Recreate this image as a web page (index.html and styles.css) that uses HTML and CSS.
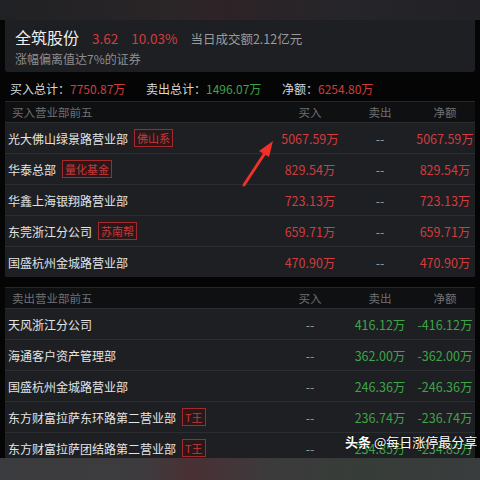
FILE: index.html
```html
<!DOCTYPE html>
<html lang="zh-CN">
<head>
    <meta charset="UTF-8">
    <meta name="viewport" content="width=device-width, initial-scale=1.0">
    <title>全筑股份 龙虎榜</title>
    <link rel="stylesheet" href="styles.css">
</head>
<body>
    <div class="screen">
        <div class="topbar"></div>

        <!-- Stock summary card -->
        <div class="card">
            <div class="headline">
                <span class="stock-name">全筑股份</span>
                <span class="price up">3.62</span>
                <span class="change up">10.03%</span>
                <span class="turnover">当日成交额2.12亿元</span>
            </div>
            <div class="reason">涨幅偏离值达7%的证券</div>
        </div>

        <div class="totals">
            <div class="total">买入总计：<span class="up">7750.87万</span></div>
            <div class="total">卖出总计：<span class="down">1496.07万</span></div>
            <div class="total">净额：<span class="up">6254.80万</span></div>
        </div>

        <!-- Buy side -->
        <div class="table">
            <div class="row head">
                <div class="name">买入营业部前五</div>
                <div class="num">买入</div>
                <div class="num">卖出</div>
                <div class="num">净额</div>
            </div>
            <div class="row">
                <div class="name">光大佛山绿景路营业部<span class="tag">佛山系</span></div>
                <div class="num up">5067.59万</div>
                <div class="num dash">--</div>
                <div class="num up">5067.59万</div>
            </div>
            <div class="row">
                <div class="name">华泰总部<span class="tag">量化基金</span></div>
                <div class="num up">829.54万</div>
                <div class="num dash">--</div>
                <div class="num up">829.54万</div>
            </div>
            <div class="row">
                <div class="name">华鑫上海银翔路营业部</div>
                <div class="num up">723.13万</div>
                <div class="num dash">--</div>
                <div class="num up">723.13万</div>
            </div>
            <div class="row">
                <div class="name">东莞浙江分公司<span class="tag">苏南帮</span></div>
                <div class="num up">659.71万</div>
                <div class="num dash">--</div>
                <div class="num up">659.71万</div>
            </div>
            <div class="row">
                <div class="name">国盛杭州金城路营业部</div>
                <div class="num up">470.90万</div>
                <div class="num dash">--</div>
                <div class="num up">470.90万</div>
            </div>
        </div>

        <!-- Sell side -->
        <div class="table sell">
            <div class="row head">
                <div class="name">卖出营业部前五</div>
                <div class="num">买入</div>
                <div class="num">卖出</div>
                <div class="num">净额</div>
            </div>
            <div class="row">
                <div class="name">天风浙江分公司</div>
                <div class="num dash">--</div>
                <div class="num down">416.12万</div>
                <div class="num down">-416.12万</div>
            </div>
            <div class="row">
                <div class="name">海通客户资产管理部</div>
                <div class="num dash">--</div>
                <div class="num down">362.00万</div>
                <div class="num down">-362.00万</div>
            </div>
            <div class="row">
                <div class="name">国盛杭州金城路营业部</div>
                <div class="num dash">--</div>
                <div class="num down">246.36万</div>
                <div class="num down">-246.36万</div>
            </div>
            <div class="row">
                <div class="name">东方财富拉萨东环路第二营业部<span class="tag">T王</span></div>
                <div class="num dash">--</div>
                <div class="num down">236.74万</div>
                <div class="num down">-236.74万</div>
            </div>
            <div class="row">
                <div class="name">东方财富拉萨团结路第二营业部<span class="tag">T王</span></div>
                <div class="num dash">--</div>
                <div class="num down">234.85万</div>
                <div class="num down">-234.85万</div>
            </div>
        </div>

        <!-- red arrow pointing at the top buyer -->
        <svg class="arrow" width="40" height="50" viewBox="0 0 40 50">
            <path d="M3 46 L24 14" stroke="#f0302a" stroke-width="3" stroke-linecap="round"/>
            <polygon points="32,2 18,12 28,18" fill="#f0302a"/>
        </svg>

        <div class="watermark"><b>头条</b> @每日涨停最分享</div>
    </div>
    <div class="bottombar"></div>
</body>
</html>
```

FILE: styles.css
```css
body {
    margin: 0;
    background-color: #050505;
    font-family: "Noto Sans CJK SC", "Noto Sans", sans-serif;
    color: #e4e4e4;
}
.screen {
    position: relative;
    height: 458px;
    overflow: hidden;
}
.topbar {
    height: 20px;
    background: linear-gradient(90deg, #202124 0%, #2a2527 35%, #2e2326 45%, #262529 70%, #222226 100%);
}
.up {
    color: #d23c3e;
}
.down {
    color: #3fa447;
}
.card {
    margin: 0 5px;
    height: 52px;
    box-sizing: border-box;
    padding: 5px 10px 0;
    background-color: #1d1f23;
    border-radius: 0 0 3px 3px;
}
.headline {
    display: flex;
    align-items: baseline;
    height: 24px;
}
.stock-name {
    font-size: 16px;
    color: #eeeeee;
    margin-right: 13px;
}
.price,
.change {
    font-size: 13.5px;
    margin-right: 13px;
}
.turnover {
    font-size: 12.5px;
    color: #9a9a9c;
}
.reason {
    font-size: 12px;
    color: #8e8e90;
    line-height: 20px;
}
.totals {
    display: flex;
    height: 29px;
    box-sizing: border-box;
    padding: 4px 0 0 10px;
    align-items: center;
    font-size: 12px;
    color: #d8d8d8;
}
.total {
    width: 136px;
}
.table {
    margin: 0 5px;
    background-color: #1d1f23;
}
.table.sell {
    margin-top: 10px;
}
.row {
    display: grid;
    grid-template-columns: 1fr 70px 70px 60px;
    align-items: center;
    height: 31px;
    border-top: 1px solid #2b2d31;
    box-sizing: border-box;
    font-size: 12px;
}
.row.head {
    height: 21px;
    background-color: #0f1012;
    border-top: 1px solid #26272b;
    color: #6f7073;
    font-size: 11.5px;
}
.name {
    display: flex;
    align-items: center;
    padding-left: 3px;
    white-space: nowrap;
}
.head .name {
    padding-left: 7px;
}
.num {
    text-align: center;
    white-space: nowrap;
    font-size: 12.5px;
}
.head .num {
    font-size: 11.5px;
}
.dash {
    color: #9a9a9a;
}
.tag {
    margin-left: 6px;
    padding: 0 2px;
    height: 16px;
    line-height: 16px;
    font-size: 11px;
    color: #c8393b;
    background-color: #2a1719;
    border: 1px solid #a4292c;
}
.arrow {
    position: absolute;
    left: 241px;
    top: 139px;
}
.watermark {
    position: absolute;
    left: 345px;
    top: 432px;
    font-size: 13px;
    white-space: nowrap;
    color: #ffffff;
    text-shadow: 0 0 2px #000000;
}
.bottombar {
    height: 22px;
    background: linear-gradient(90deg, #3b3c3f 0%, #3d3b3e 30%, #4a3034 40%, #3c3a3c 55%, #363d38 75%, #3a3c3d 100%);
}
```
